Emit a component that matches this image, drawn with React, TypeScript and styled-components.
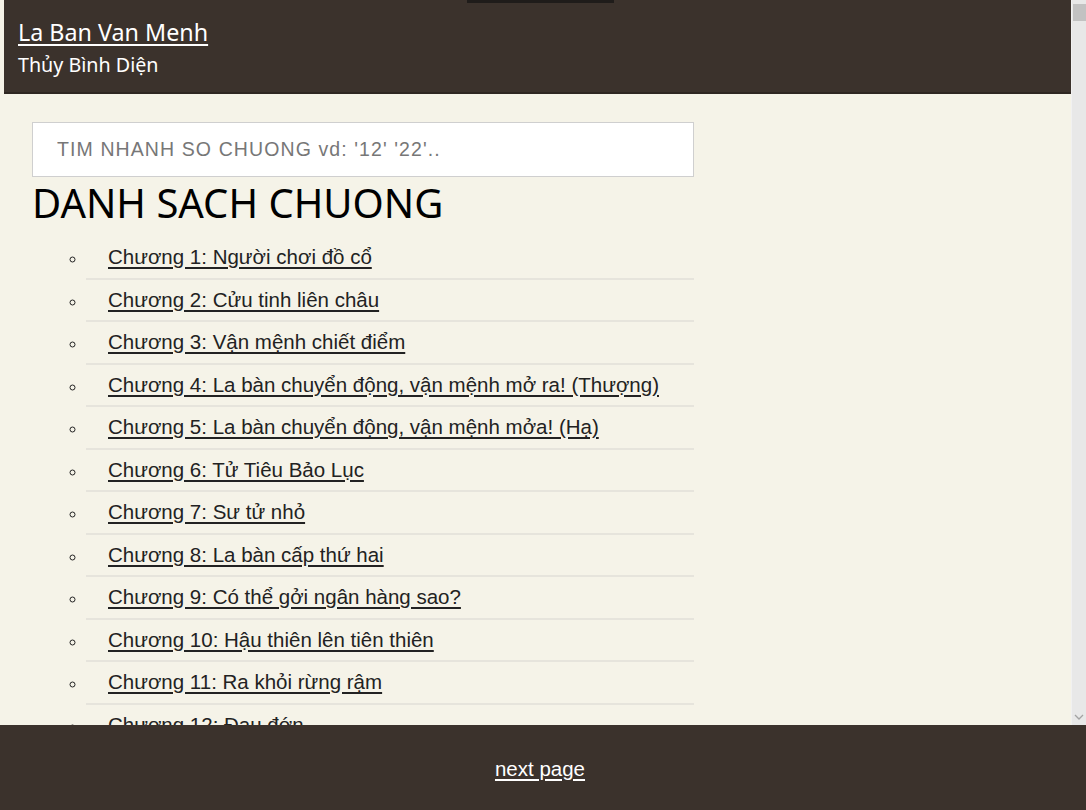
import React from "react";
import styled, { createGlobalStyle } from "styled-components";

const Global = createGlobalStyle`
  html, body { margin: 0; padding: 0; height: 100%; overflow: hidden; }
  body { background: #f5f3e8; font-family: "Liberation Sans", Arial, sans-serif; }
  #root { height: 100%; }
`;

const Shell = styled.div`
  display: flex;
  flex-direction: column;
  height: 810px;
  width: 1086px;
`;

const Viewport = styled.div`
  display: flex;
  height: 725px;
  flex: none;
`;

const ScrollArea = styled.div`
  flex: 1;
  min-width: 0;
  overflow-y: auto;
  scrollbar-width: none;
  background: #f5f3e8;
  padding-left: 4px;
  &::-webkit-scrollbar { display: none; }
`;

const ScrollTrack = styled.div`
  position: relative;
  width: 15px;
  flex: none;
  background: #e8e8e8;
  border-left: 1px solid #f1f1f1;
  box-sizing: border-box;
`;

const ScrollThumb = styled.div`
  position: absolute;
  top: 4px;
  left: 1px;
  right: 0;
  height: 17px;
  background: #c2c2c2;
`;

const ScrollArrow = styled.svg`
  position: absolute;
  bottom: 5px;
  left: 2px;
`;

const Header = styled.header`
  position: relative;
  background: #3b322c;
  height: 94px;
  box-sizing: border-box;
  padding: 18px 14px 0;
  border-bottom: 2px solid #2e2722;
  color: #fff;
  font-family: "Noto Sans", "Open Sans", sans-serif;
`;

const TopGrip = styled.div`
  position: absolute;
  top: 0;
  left: 463px;
  width: 147px;
  height: 3px;
  background: #1f1c1a;
`;

const SiteTitle = styled.a`
  display: block;
  width: max-content;
  color: #fff;
  font-size: 23.3px;
  line-height: 28px;
  text-decoration: underline;
  text-underline-offset: 3px;
  text-decoration-thickness: 1.5px;
`;

const Author = styled.div`
  font-size: 19.7px;
  line-height: 26px;
  margin-top: 6px;
`;

const Main = styled.main`
  padding: 28px 0 0 28px;
  width: 662px;
`;

const Search = styled.input`
  display: block;
  width: 662px;
  height: 55px;
  box-sizing: border-box;
  border: 1px solid #cfcfcf;
  background: #fff;
  padding: 0 24px;
  font-family: "Liberation Sans", Arial, sans-serif;
  font-size: 19.5px;
  letter-spacing: 1.1px;
  outline: none;
  &::placeholder { color: #777; }
`;

const Heading = styled.h1`
  margin: 2px 0 0;
  font-family: "Noto Sans", "Open Sans", sans-serif;
  font-weight: 400;
  font-size: 40px;
  line-height: 48px;
  color: #000;
`;

const ChapterList = styled.ul`
  list-style: circle;
  margin: 10px 0 0;
  padding-left: 54px;
`;

const Chapter = styled.li`
  padding: 9px 0 9px 22px;
  line-height: 22.5px;
  font-size: 20.5px;
  border-bottom: 2px solid #e6e4dc;
  &::marker { font-size: 16px; color: #222; }
`;

const ChapterLink = styled.a`
  color: #222;
  text-decoration: underline;
  text-underline-offset: 3px;
  text-decoration-thickness: 1.5px;
`;

const Footer = styled.footer`
  flex: 1;
  background: #3b322c;
  display: flex;
  align-items: center;
  justify-content: center;
  padding-right: 6px;
`;

const NextLink = styled.a`
  color: #fff;
  font-size: 20.5px;
  text-decoration: underline;
  text-underline-offset: 3px;
  text-decoration-thickness: 1.5px;
  margin-top: 2px;
`;

const named = [
  "Người chơi đồ cổ",
  "Cửu tinh liên châu",
  "Vận mệnh chiết điểm",
  "La bàn chuyển động, vận mệnh mở ra! (Thượng)",
  "La bàn chuyển động, vận mệnh mởa! (Hạ)",
  "Tử Tiêu Bảo Lục",
  "Sư tử nhỏ",
  "La bàn cấp thứ hai",
  "Có thể gởi ngân hàng sao?",
  "Hậu thiên lên tiên thiên",
  "Ra khỏi rừng rậm",
  "Đau đớn",
];

const chapters = Array.from({ length: 50 }, (_, i) =>
  i < named.length ? `Chương ${i + 1}: ${named[i]}` : `Chương ${i + 1}`
);

export default function App() {
  return (
    <>
      <Global />
      <Shell>
        <Viewport>
          <ScrollArea>
            <Header>
              <TopGrip />
              <SiteTitle href="#">La Ban Van Menh</SiteTitle>
              <Author>Thủy Bình Diện</Author>
            </Header>
            <Main>
              <Search placeholder="TIM NHANH SO CHUONG vd: '12' '22'.." />
              <Heading>DANH SACH CHUONG</Heading>
              <ChapterList>
                {chapters.map((c) => (
                  <Chapter key={c}>
                    <ChapterLink href="#">{c}</ChapterLink>
                  </Chapter>
                ))}
              </ChapterList>
            </Main>
          </ScrollArea>
          <ScrollTrack>
            <ScrollThumb />
            <ScrollArrow width="10" height="6" viewBox="0 0 10 6">
              <path d="M1 1 L5 5 L9 1" fill="none" stroke="#a3a3a3" strokeWidth="1.3" />
            </ScrollArrow>
          </ScrollTrack>
        </Viewport>
        <Footer>
          <NextLink href="#">next page</NextLink>
        </Footer>
      </Shell>
    </>
  );
}
